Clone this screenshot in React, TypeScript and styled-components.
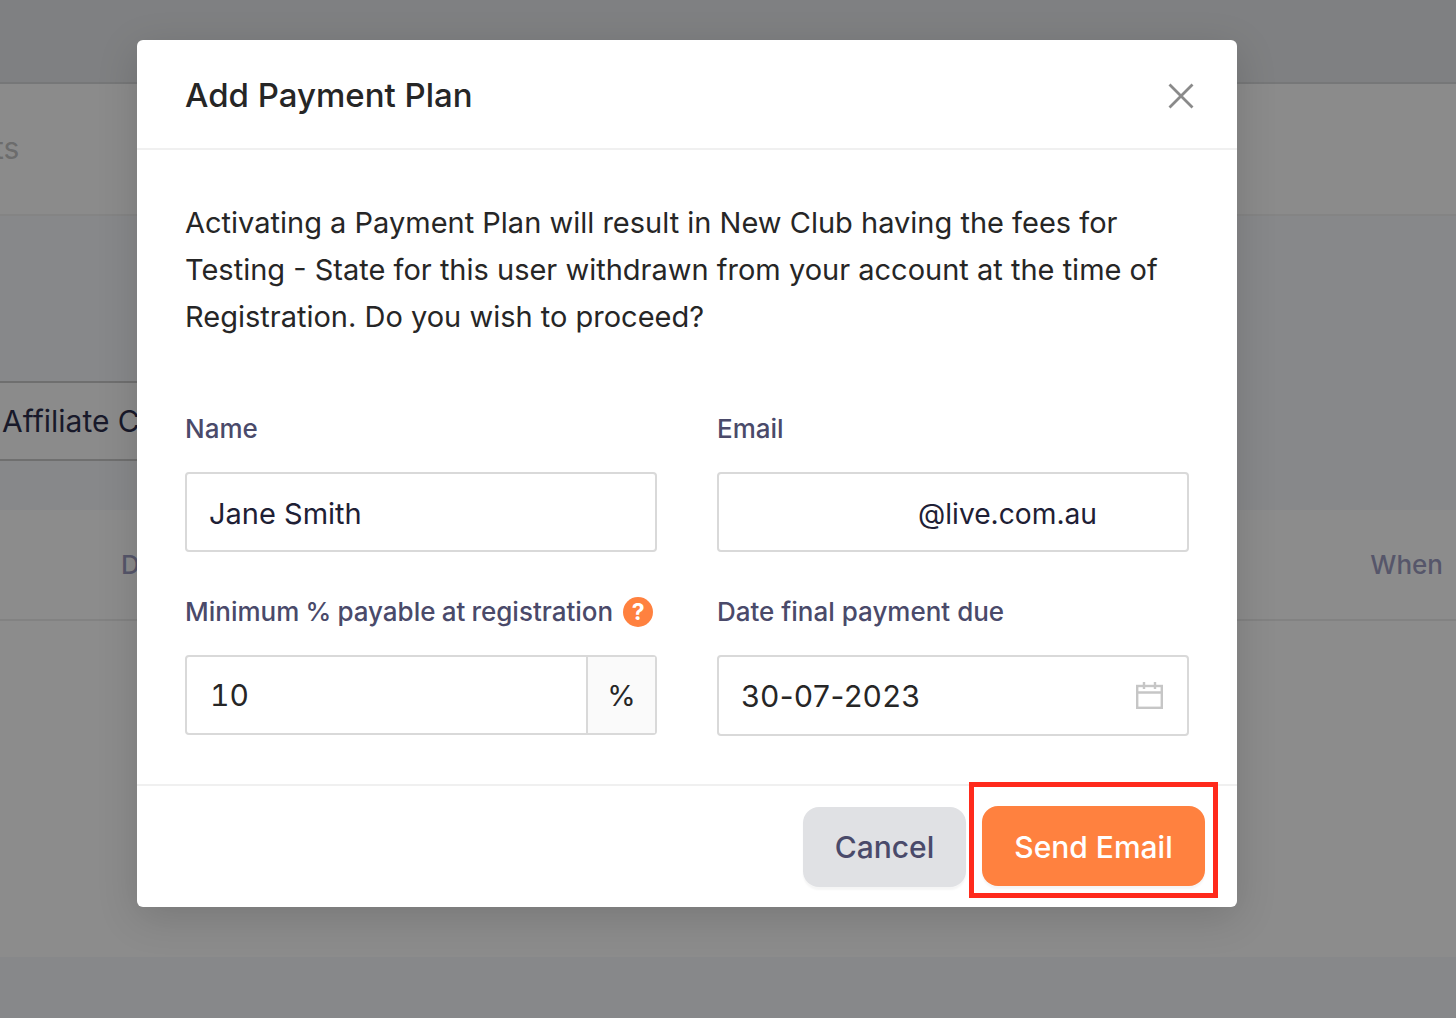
import React from 'react'
import styled, { createGlobalStyle } from 'styled-components'

const GlobalStyle = createGlobalStyle`
	* {
		box-sizing: border-box;
	}
	html, body {
		margin: 0;
		padding: 0;
		background: #87888a;
		font-family: Inter, "Liberation Sans", sans-serif;
		overflow: hidden;
	}
`

const CalendarIcon = () => (
	<svg width="27" height="27" viewBox="0 0 27 27" fill="none" stroke="#c6c6c6" strokeWidth="2.4">
		<rect x="1.2" y="4" width="24.6" height="21.8" />
		<path d="M1.2 10.5H25.8M8 0V7M19 0V7" />
	</svg>
)

const CloseIcon = () => (
	<svg width="26" height="26" viewBox="0 0 26 26" fill="none" stroke="#8a8a8a" strokeWidth="2.8">
		<path d="M1.5 1.5L24.5 24.5M24.5 1.5L1.5 24.5" />
	</svg>
)

export default function App() {
	return (
		<Page>
			<GlobalStyle />
			<TopBar />
			<TabsRow>
				<TabText>ts</TabText>
			</TabsRow>
			<Gap $height={165} />
			<AffiliateRow>Affiliate Club</AffiliateRow>
			<Gap $height={49} />
			<TableHead>
				<HeadCell>Date</HeadCell>
				<HeadCell>When</HeadCell>
			</TableHead>
			<TableBody />

			<Modal>
				<ModalHeader>
					<ModalTitle>Add Payment Plan</ModalTitle>
					<CloseButton>
						<CloseIcon />
					</CloseButton>
				</ModalHeader>
				<ModalBody>
					<Intro>
						Activating a Payment Plan will result in New Club having the fees for
						<br />
						Testing - State for this user withdrawn from your account at the time of
						<br />
						Registration. Do you wish to proceed?
					</Intro>
					<FormGrid>
						<Field>
							<Label>Name</Label>
							<Input>Jane Smith</Input>
						</Field>
						<Field>
							<Label>Email</Label>
							<EmailInput>@live.com.au</EmailInput>
						</Field>
						<Field>
							<HelpLabel>
								Minimum % payable at registration
								<HelpBadge>?</HelpBadge>
							</HelpLabel>
							<InputGroup>
								<GroupValue>10</GroupValue>
								<GroupAddon>%</GroupAddon>
							</InputGroup>
						</Field>
						<Field>
							<Label>Date final payment due</Label>
							<DateInput>
								<DateValue>30-07-2023</DateValue>
								<CalendarIcon />
							</DateInput>
						</Field>
					</FormGrid>
				</ModalBody>
				<ModalFooter>
					<CancelButton>Cancel</CancelButton>
					<SendButton>Send Email</SendButton>
					<Highlight />
				</ModalFooter>
			</Modal>
		</Page>
	)
}

const Page = styled.div`
	position: relative;
	width: 1456px;
	height: 1018px;
	overflow: hidden;
	display: flex;
	flex-direction: column;
	background: #87888a;
`

const TopBar = styled.div`
	height: 84px;
	flex: none;
	background: #7f8082;
	border-bottom: 2px solid #767778;
`

const TabsRow = styled.div`
	height: 132px;
	flex: none;
	display: flex;
	align-items: center;
	background: #8b8b8b;
	border-bottom: 2px solid #848484;
`

const TabText = styled.span`
	margin-left: -6px;
	padding-bottom: 2px;
	font-size: 30px;
	color: #6c6c6c;
`

const Gap = styled.div<{ $height: number }>`
	height: ${(props) => props.$height}px;
	flex: none;
`

const AffiliateRow = styled.div`
	width: 400px;
	height: 80px;
	flex: none;
	display: flex;
	align-items: center;
	padding-left: 2px;
	background: #8b8b8b;
	border-top: 2px solid #6f6f6f;
	border-bottom: 2px solid #6f6f6f;
	font-size: 30px;
	color: #18192a;
	white-space: nowrap;
`

const TableHead = styled.div`
	height: 111px;
	flex: none;
	display: flex;
	align-items: center;
	justify-content: space-between;
	padding: 0 13px 0 121px;
	background: #8c8c8c;
	border-bottom: 2px solid #828282;
`

const HeadCell = styled.span`
	font-size: 26px;
	font-weight: 500;
	color: #56566a;
`

const TableBody = styled.div`
	height: 336px;
	flex: none;
	background: #8c8c8c;
`

const Modal = styled.div`
	position: absolute;
	left: 137px;
	top: 40px;
	width: 1100px;
	height: 867px;
	display: flex;
	flex-direction: column;
	background: #fff;
	border-radius: 6px;
	box-shadow: 0 10px 40px rgba(0, 0, 0, 0.15);
`

const ModalHeader = styled.div`
	height: 110px;
	flex: none;
	display: flex;
	align-items: center;
	justify-content: space-between;
	padding: 3px 43px 0 48px;
	border-bottom: 2px solid #f0f0f0;
`

const ModalTitle = styled.h2`
	margin: 0 0 2px;
	font-size: 33px;
	font-weight: 500;
	color: #262626;
`

const CloseButton = styled.div`
	display: flex;
`

const ModalBody = styled.div`
	flex: 1;
	padding: 49px 48px 0 48px;
	border-bottom: 2px solid #f0f0f0;
`

const Intro = styled.p`
	margin: 0;
	font-size: 29px;
	line-height: 47px;
	color: #262626;
	white-space: nowrap;
`

const FormGrid = styled.div`
	display: grid;
	grid-template-columns: 472px 472px;
	column-gap: 60px;
	row-gap: 40px;
	margin-top: 69px;
`

const Field = styled.div`
	display: flex;
	flex-direction: column;
`

const Label = styled.div`
	height: 41px;
	margin-bottom: 22px;
	padding-bottom: 2px;
	display: flex;
	align-items: center;
	font-size: 26px;
	font-weight: 500;
	color: #4a4a6a;
	white-space: nowrap;
`

const HelpLabel = styled(Label)`
	word-spacing: -0.8px;
`

const HelpBadge = styled.span`
	width: 30px;
	height: 30px;
	margin-left: 10px;
	display: flex;
	align-items: center;
	justify-content: center;
	border-radius: 50%;
	background: #ff813f;
	color: #fff;
	font-size: 23px;
	font-weight: 700;
`

const Input = styled.div`
	height: 80px;
	display: flex;
	align-items: center;
	padding: 2px 0 0 22px;
	border: 2px solid #d9d9d9;
	border-radius: 4px;
	background: #fff;
	font-size: 29px;
	color: #1e2035;
`

const EmailInput = styled(Input)`
	padding: 4px 0 0 199px;
	font-size: 28.2px;
`

const InputGroup = styled.div`
	height: 80px;
	display: flex;
	border: 2px solid #d9d9d9;
	border-radius: 4px;
`

const GroupValue = styled.div`
	flex: 1;
	display: flex;
	align-items: center;
	padding-left: 23px;
	font-size: 30px;
	font-variant-numeric: tabular-nums;
	color: #262626;
`

const GroupAddon = styled.div`
	width: 69px;
	display: flex;
	align-items: center;
	justify-content: center;
	background: #fafafa;
	border-left: 2px solid #d9d9d9;
	font-size: 29px;
	color: #262626;
`

const DateInput = styled.div`
	height: 81px;
	display: flex;
	align-items: center;
	justify-content: space-between;
	padding: 0 24px 0 22px;
	border: 2px solid #d9d9d9;
	border-radius: 4px;
`

const DateValue = styled.span`
	font-size: 30px;
	letter-spacing: 0.6px;
	color: #262626;
`

const ModalFooter = styled.div`
	position: relative;
	height: 121px;
	flex: none;
	display: flex;
	align-items: flex-start;
	justify-content: flex-end;
	gap: 16px;
	padding: 20px 32px 0 0;
`

const FooterButton = styled.div`
	height: 80px;
	display: flex;
	align-items: center;
	justify-content: center;
	border-radius: 16px;
	font-size: 30px;
	font-weight: 500;
	box-shadow: 0 3px 2px rgba(0, 0, 0, 0.04);
`

const CancelButton = styled(FooterButton)`
	width: 163px;
	margin-top: 1px;
	background: #e0e1e4;
	color: #4a4a6a;
`

const SendButton = styled(FooterButton)`
	width: 223px;
	padding-top: 2px;
	background: #ff813f;
	color: #fff;
`

const Highlight = styled.div`
	position: absolute;
	left: 832px;
	top: -4px;
	width: 249px;
	height: 116px;
	border: 5px solid #ff2a1c;
	pointer-events: none;
`
